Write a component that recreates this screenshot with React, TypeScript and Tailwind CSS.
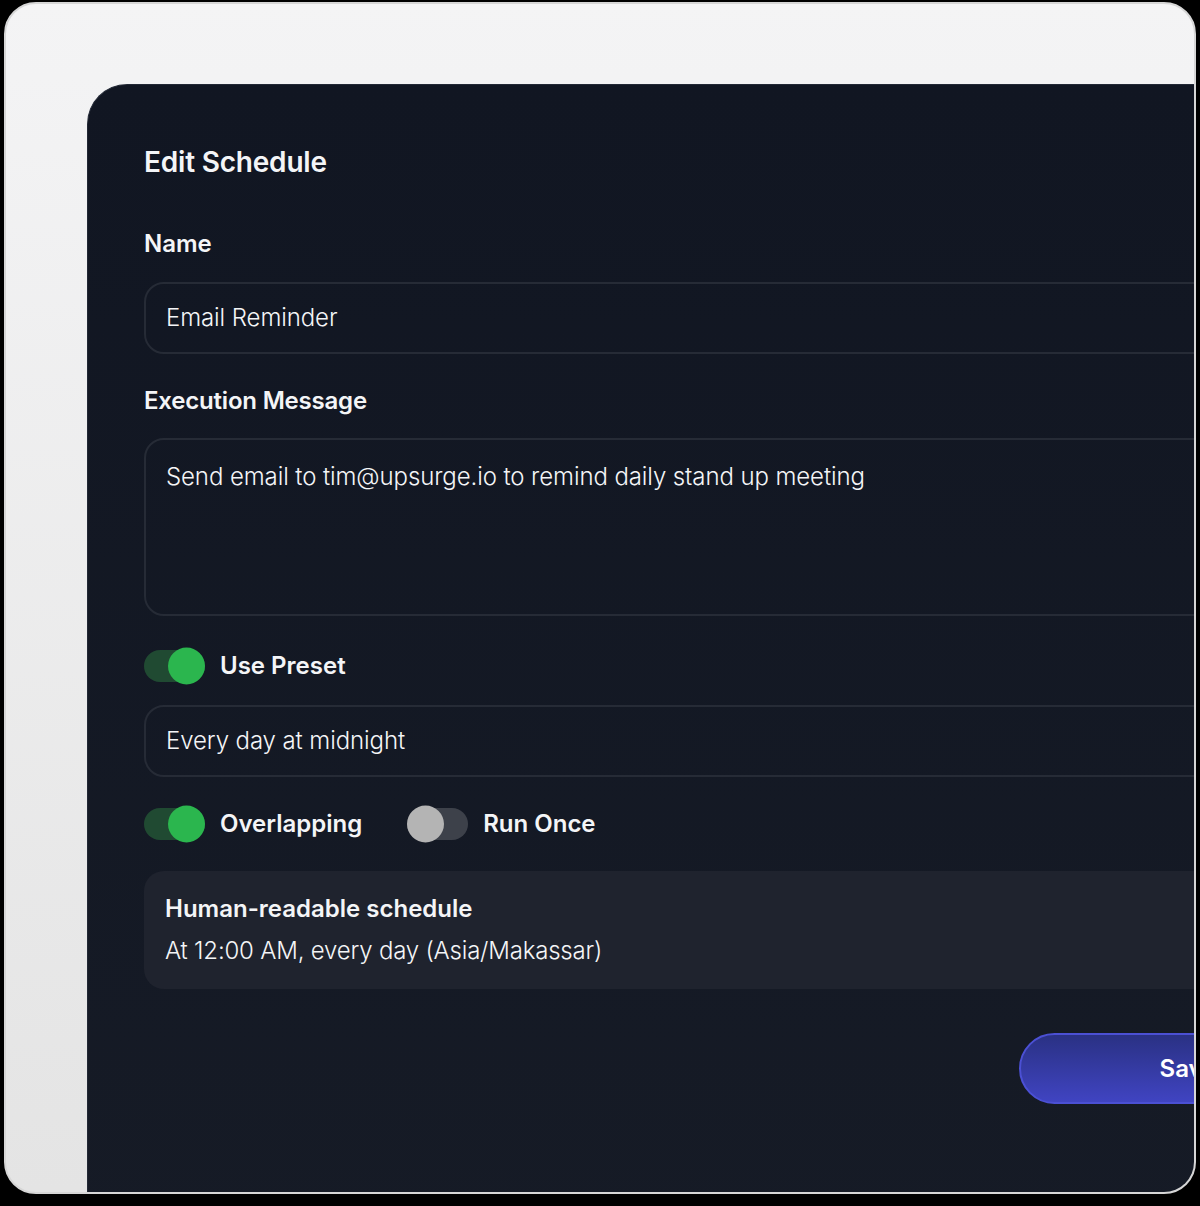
import React from "react";

function Toggle({ on }: { on: boolean }) {
  return (
    <div className={"relative h-[32px] w-[61px] rounded-full " + (on ? "bg-[#204a32]" : "bg-[#3d414a]")}>
      <div
        className={
          "absolute top-1/2 h-[37px] w-[37px] -translate-y-1/2 rounded-full " +
          (on ? "right-0 bg-[#2bb64e]" : "left-0 bg-[#b4b4b4]")
        }
      />
    </div>
  );
}

export default function App() {
  const font = { fontFamily: "Inter, 'Noto Sans', sans-serif" };
  return (
    <div className="h-[1206px] w-[1200px] bg-black pl-[4px] pt-[2px]" style={font}>
      <div className="h-[1192px] w-[1192px] overflow-hidden rounded-[32px] border-2 border-[#d6d6d6] bg-gradient-to-b from-[#f4f4f5] to-[#e4e4e4] pl-[81px] pt-[80px]">
        <div className="min-h-[1200px] w-[1326px] rounded-tl-[40px] border-l border-t border-[#222835] bg-gradient-to-b from-[#111622] to-[#161b26] px-[56px] pt-[59px] text-[#f4f5f7]">
          <h1 className="text-[28px] font-semibold leading-[36px] tracking-[-0.2px]">Edit Schedule</h1>
          <div className="mt-[48px] text-[24px] font-semibold leading-[32px]">Name</div>
          <div className="mt-[22px] flex h-[72px] items-center rounded-[20px] border-2 border-[#262b36] px-[20px] text-[24px] font-light tracking-[-0.1px]">
            Email Reminder
          </div>
          <div className="mt-[31px] text-[24px] font-semibold leading-[32px] tracking-[-0.2px]">Execution Message</div>
          <div className="mt-[21px] h-[178px] rounded-[20px] border-2 border-[#262b36] px-[20px] pt-[21px] text-[24px] font-light leading-[32px] tracking-[-0.1px]">
            Send email to tim@upsurge.io to remind daily stand up meeting
          </div>
          <div className="mt-[34px] flex items-center gap-[15px]">
            <Toggle on />
            <span className="text-[24px] font-semibold leading-[32px]">Use Preset</span>
          </div>
          <div className="mt-[23px] flex h-[72px] items-center rounded-[20px] border-2 border-[#262b36] px-[20px] text-[24px] font-light tracking-[-0.1px]">
            Every day at midnight
          </div>
          <div className="mt-[31px] flex items-center">
            <Toggle on />
            <span className="ml-[15px] text-[24px] font-semibold leading-[32px]">Overlapping</span>
            <div className="ml-[45px]">
              <Toggle on={false} />
            </div>
            <span className="ml-[15px] text-[24px] font-semibold leading-[32px]">Run Once</span>
          </div>
          <div className="mt-[31px] rounded-[20px] bg-[#1f232e] px-[21px] pb-[22px] pt-[22px]">
            <div className="text-[24px] font-semibold leading-[32px]">Human-readable schedule</div>
            <div className="mt-[10px] text-[24px] font-light leading-[32px] tracking-[-0.2px]">At 12:00 AM, every day (Asia/Makassar)</div>
          </div>
          <div className="mt-[44px] flex justify-end">
            <button className="h-[71px] w-[338px] rounded-full border-2 border-[#4b50d4] bg-gradient-to-b from-[#2a3184] to-[#4044c2] text-[24px] font-semibold text-white">
              Save
            </button>
          </div>
        </div>
      </div>
    </div>
  );
}
